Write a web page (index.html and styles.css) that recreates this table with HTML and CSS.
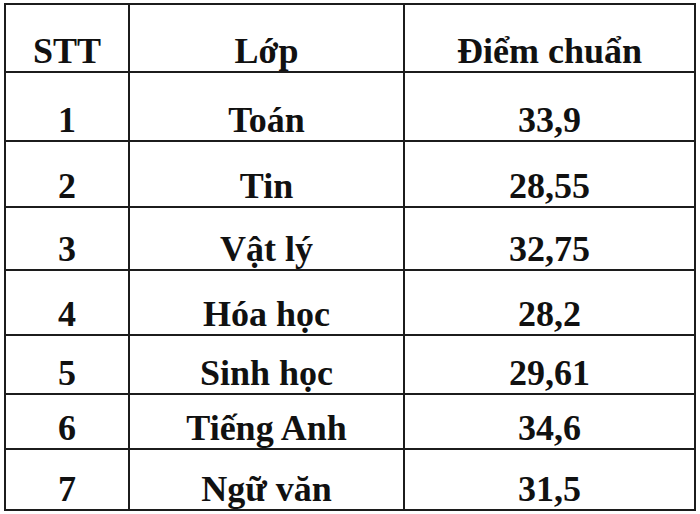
FILE: index.html
```html
<!DOCTYPE html>
<html lang="vi">
<head>
<meta charset="utf-8">
<title>Điểm chuẩn</title>
<link rel="stylesheet" href="styles.css">
</head>
<body>
<div class="table" role="table">
  <div class="cell r1">STT</div><div class="cell r1">Lớp</div><div class="cell r1">Điểm chuẩn</div>
  <div class="cell">1</div><div class="cell">Toán</div><div class="cell">33,9</div>
  <div class="cell">2</div><div class="cell">Tin</div><div class="cell">28,55</div>
  <div class="cell">3</div><div class="cell">Vật lý</div><div class="cell">32,75</div>
  <div class="cell">4</div><div class="cell">Hóa học</div><div class="cell">28,2</div>
  <div class="cell">5</div><div class="cell">Sinh học</div><div class="cell">29,61</div>
  <div class="cell">6</div><div class="cell">Tiếng Anh</div><div class="cell">34,6</div>
  <div class="cell">7</div><div class="cell">Ngữ văn</div><div class="cell">31,5</div>
</div>
</body>
</html>
```
FILE: styles.css
```css
html, body {
  margin: 0;
  padding: 0;
  background: #ffffff;
}
body {
  padding: 3px 0 0 4px;
}
.table {
  display: grid;
  width: 692px;
  box-sizing: border-box;
  grid-template-columns: 122px 273px 289px;
  grid-template-rows: 66px 67px 64px 61px 63px 57px 53px 59px;
  gap: 2px;
  padding: 2px;
  background: #1c1c1c;
}
.cell {
  background: #ffffff;
  display: flex;
  align-items: flex-end;
  justify-content: center;
  padding-bottom: 2px;
  box-sizing: border-box;
  font-family: "Liberation Serif", "Times New Roman", serif;
  font-weight: bold;
  font-size: 36px;
  line-height: 36px;
  color: #111111;
  white-space: nowrap;
}
```
